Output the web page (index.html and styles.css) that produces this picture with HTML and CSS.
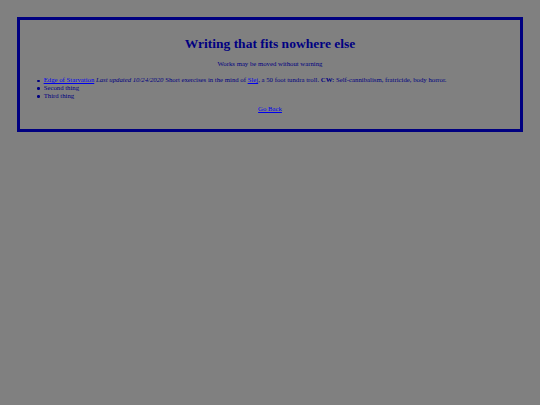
FILE: index.html
```html
<!DOCTYPE html>
<html>
<head>
<meta charset="utf-8">
<title>Writing that fits nowhere else</title>
<link rel="stylesheet" href="styles.css">
</head>
<body>
<div class="box">
  <h1 class="title">Writing that fits nowhere else</h1>
  <p class="note">Works may be moved without warning</p>
  <ul class="works">
    <li><a href="#">Edge of Starvation</a> <em>Last updated 10/24/2020</em> Short exercises in the mind of <a href="#">Slej</a>, a 50 foot tundra troll. <strong>CW:</strong> Self-cannibalism, fratricide, body horror.</li>
    <li>Second thing</li>
    <li>Third thing</li>
  </ul>
  <p class="back"><a href="#">Go Back</a></p>
</div>
</body>
</html>
```

FILE: styles.css
```css
html {
  background: #808080;
}
body {
  margin: 3.4px;
  font-family: "Liberation Serif", "Times New Roman", serif;
  font-size: 6.75px;
  line-height: 7.8px;
  color: #000080;
}
a {
  color: #0000ee;
}
.box {
  margin: 13.5px;
  border: 3px solid #000080;
  padding: 6.75px 6.75px 9.5px;
}
.title {
  text-align: center;
  font-size: 13.5px;
  line-height: 15.5px;
  margin: 9px 0;
}
.note {
  text-align: center;
  margin: 6.75px 0;
}
.works {
  margin: 8.5px 0 0;
  padding-left: 17px;
  list-style: none;
}
.works li {
  position: relative;
}
.works li::before {
  content: "";
  position: absolute;
  left: -6.5px;
  top: 3.2px;
  width: 2.4px;
  height: 2.4px;
  border-radius: 50%;
  background: #000080;
}
.back {
  text-align: center;
  margin: 4.75px 0 6.75px;
}
```
